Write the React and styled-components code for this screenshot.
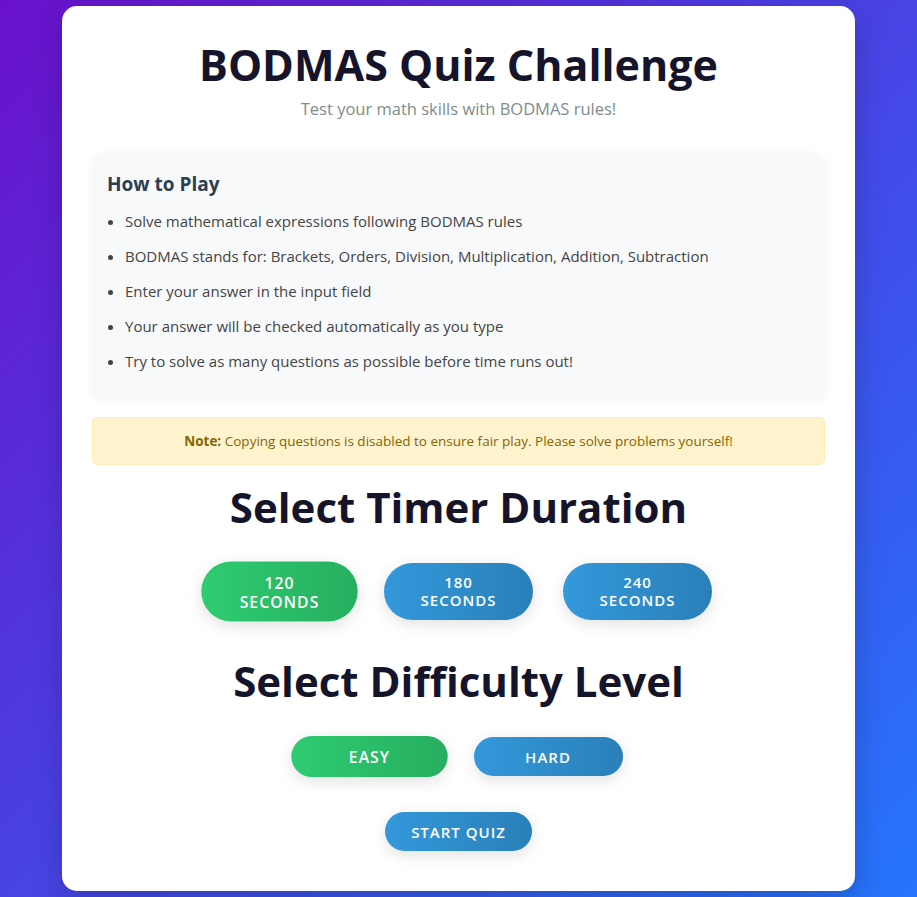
import React, { useState } from "react";
import styled, { createGlobalStyle } from "styled-components";

const GlobalStyle = createGlobalStyle`
  * { box-sizing: border-box; }
  body {
    margin: 0;
    font-family: "Open Sans", "Noto Sans", sans-serif;
    background: linear-gradient(135deg, #6a11cb 0%, #2575fc 100%);
    min-height: 100vh;
  }
`;

const Page = styled.div`
  display: flex;
  justify-content: center;
  padding: 6px 0;
`;

const Card = styled.div`
  width: 793px;
  background: #fff;
  border-radius: 15px;
  padding: 33px 30px 40px;
  box-shadow: 0 10px 30px rgba(0, 0, 0, 0.2);
  text-align: center;
`;

const Title = styled.h1`
  margin: 0;
  font-size: 43px;
  font-weight: 700;
  line-height: 1.2;
  color: #16142a;
`;

const Subtitle = styled.p`
  margin: 6px 0 33px;
  font-size: 16.5px;
  color: #7f8c8d;
`;

const Rules = styled.div`
  background: #f8f9fa;
  border-radius: 10px;
  padding: 18px 15px 18px;
  text-align: left;
  box-shadow: 0 2px 8px rgba(0, 0, 0, 0.06);
`;

const RulesTitle = styled.h3`
  margin: 0 0 7px;
  font-size: 19px;
  font-weight: 700;
  color: #2c3e50;
`;

const RuleList = styled.ul`
  margin: 0;
  padding-left: 18px;
`;

const Rule = styled.li`
  font-size: 15px;
  line-height: 35px;
  color: #444;
`;

const Note = styled.div`
  margin-top: 20px;
  background: #fff3cd;
  border: 1px solid #ffeeba;
  border-radius: 5px;
  padding: 14px;
  font-size: 13.5px;
  color: #856404;

  strong { font-weight: 700; }
`;

const SectionTitle = styled.h2`
  margin: 17px 0 31px;
  font-size: 42px;
  font-weight: 700;
  line-height: 1.2;
  color: #16142a;
`;

const OptionRow = styled.div`
  display: flex;
  justify-content: center;
  gap: 30px;
  margin-bottom: 36px;
`;

const Pill = styled.button`
  min-width: ${({ $wide }) => ($wide ? "149px" : "0")};
  padding: 10.5px 26px;
  border: none;
  border-radius: 30px;
  font-family: inherit;
  font-size: 15px;
  font-weight: 600;
  line-height: 18px;
  letter-spacing: 1px;
  text-transform: uppercase;
  color: #fff;
  cursor: pointer;
  background: ${({ $active }) =>
    $active
      ? "linear-gradient(90deg, #2ecc71, #27ae60)"
      : "linear-gradient(90deg, #3498db, #2980b9)"};
  box-shadow: 0 4px 15px rgba(0, 0, 0, 0.12);
  transform: ${({ $active }) => ($active ? "scale(1.05)" : "none")};
`;

const Line = styled.span`
  display: block;
`;

const StartRow = styled.div`
  display: flex;
  justify-content: center;
  margin-top: 25px;
`;

const rules = [
  "Solve mathematical expressions following BODMAS rules",
  "BODMAS stands for: Brackets, Orders, Division, Multiplication, Addition, Subtraction",
  "Enter your answer in the input field",
  "Your answer will be checked automatically as you type",
  "Try to solve as many questions as possible before time runs out!",
];

const durations = [120, 180, 240];
const levels = ["easy", "hard"];

const App = () => {
  const [duration, setDuration] = useState(120);
  const [level, setLevel] = useState("easy");

  return (
    <Page>
      <GlobalStyle />
      <Card>
        <Title>BODMAS Quiz Challenge</Title>
        <Subtitle>Test your math skills with BODMAS rules!</Subtitle>

        <Rules>
          <RulesTitle>How to Play</RulesTitle>
          <RuleList>
            {rules.map((r, i) => (
              <Rule key={i}>{r}</Rule>
            ))}
          </RuleList>
        </Rules>

        <Note>
          <strong>Note:</strong> Copying questions is disabled to ensure fair play. Please solve problems yourself!
        </Note>

        <SectionTitle>Select Timer Duration</SectionTitle>
        <OptionRow>
          {durations.map((d) => (
            <Pill key={d} $wide $active={d === duration} onClick={() => setDuration(d)}>
              <Line>{d}</Line>
              <Line>seconds</Line>
            </Pill>
          ))}
        </OptionRow>

        <SectionTitle>Select Difficulty Level</SectionTitle>
        <OptionRow>
          {levels.map((l) => (
            <Pill key={l} $wide $active={l === level} onClick={() => setLevel(l)}>
              {l}
            </Pill>
          ))}
        </OptionRow>

        <StartRow>
          <Pill>Start Quiz</Pill>
        </StartRow>
      </Card>
    </Page>
  );
};

export default App;
